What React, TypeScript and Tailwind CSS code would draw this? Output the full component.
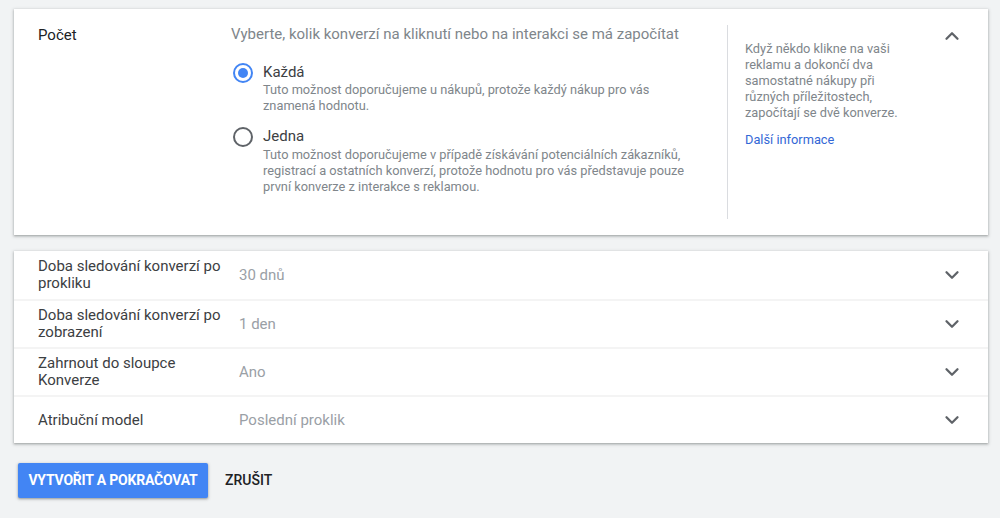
import { ChevronDown, ChevronUp } from "lucide-react";

const rows = [
  { label: "Doba sledování konverzí po prokliku", value: "30 dnů" },
  { label: "Doba sledování konverzí po zobrazení", value: "1 den" },
  { label: "Zahrnout do sloupce Konverze", value: "Ano" },
  { label: "Atribuční model", value: "Poslední proklik" },
];

const shadow = "shadow-[0_1px_2px_rgba(60,64,67,0.35),0_1px_3px_1px_rgba(60,64,67,0.15)]";

function Radio({ checked }: { checked: boolean }) {
  return (
    <span
      className={`mt-[1px] flex h-[20px] w-[20px] shrink-0 items-center justify-center rounded-full border-2 ${
        checked ? "border-[#4285f4]" : "border-[#5f6368]"
      }`}
    >
      {checked && <span className="h-[10px] w-[10px] rounded-full bg-[#4285f4]" />}
    </span>
  );
}

export default function App() {
  return (
    <div className="min-h-[518px] bg-[#f1f3f4] px-[14px] pt-[9px] font-['Roboto',sans-serif] text-[#3c4043]">
      <div className={`flex h-[226px] w-[974px] bg-white ${shadow}`}>
        <div className="w-[217px] pl-[24px] pt-[16px] text-[15px] leading-[20px] text-[#202124]">Počet</div>
        <div className="w-[496px] pt-[15px]">
          <div className="text-[15px] leading-[20px] text-[#80868b]">
            Vyberte, kolik konverzí na kliknutí nebo na interakci se má započítat
          </div>
          <div className="mt-[18px] flex gap-[10px] pl-[2px]">
            <Radio checked />
            <div>
              <div className="text-[15px] leading-[20px] text-[#3c4043]">Každá</div>
              <div className="w-[440px] text-[12.8px] leading-[16px] text-[#80868b]">
                Tuto možnost doporučujeme u nákupů, protože každý nákup pro vás znamená hodnotu.
              </div>
            </div>
          </div>
          <div className="mt-[12px] flex gap-[10px] pl-[2px]">
            <Radio checked={false} />
            <div>
              <div className="text-[15px] leading-[20px] text-[#3c4043]">Jedna</div>
              <div className="mt-[1px] w-[440px] text-[12.8px] leading-[16px] text-[#80868b]">
                Tuto možnost doporučujeme v případě získávání potenciálních zákazníků, registrací a ostatních konverzí,
                protože hodnotu pro vás představuje pouze první konverze z interakce s reklamou.
              </div>
            </div>
          </div>
        </div>
        <div className="my-[16px] w-px bg-[#dadce0]" />
        <div className="w-[180px] pl-[17px] pt-[32px]">
          <div className="w-[162px] text-[12.8px] leading-[16px] text-[#80868b]">
            Když někdo klikne na vaši reklamu a dokončí dva samostatné nákupy při různých příležitostech, započítají se
            dvě konverze.
          </div>
          <div className="mt-[11px] text-[12.8px] leading-[16px] text-[#3367d6]">Další informace</div>
        </div>
        <div className="flex flex-1 justify-end pr-[25px] pt-[16px]">
          <ChevronUp className="h-[22px] w-[22px] text-[#5f6368]" strokeWidth={2.5} />
        </div>
      </div>

      <div className={`mt-[16px] w-[974px] bg-white ${shadow}`}>
        {rows.map((r, i) => (
          <div
            key={r.label}
            className={`flex h-[48px] items-center ${i > 0 ? "border-t-2 border-[#f4f4f4]" : ""}`}
          >
            <div className="w-[225px] pl-[24px] pr-[8px] text-[15px] leading-[17px] text-[#3c4043]">{r.label}</div>
            <div className="flex-1 text-[15px] leading-[20px] text-[#9aa0a6]">{r.value}</div>
            <ChevronDown className="mr-[25px] h-[22px] w-[22px] text-[#5f6368]" strokeWidth={2.5} />
          </div>
        ))}
      </div>

      <div className="mt-[20px] flex items-center gap-[17px] pl-[4px]">
        <button
          className={`h-[35px] w-[190px] rounded-[2px] bg-[#4285f4] text-[14px] font-bold tracking-[-0.2px] text-white ${shadow}`}
        >
          VYTVOŘIT A POKRAČOVAT
        </button>
        <button className="text-[14px] font-medium text-[#202124]">ZRUŠIT</button>
      </div>
    </div>
  );
}
